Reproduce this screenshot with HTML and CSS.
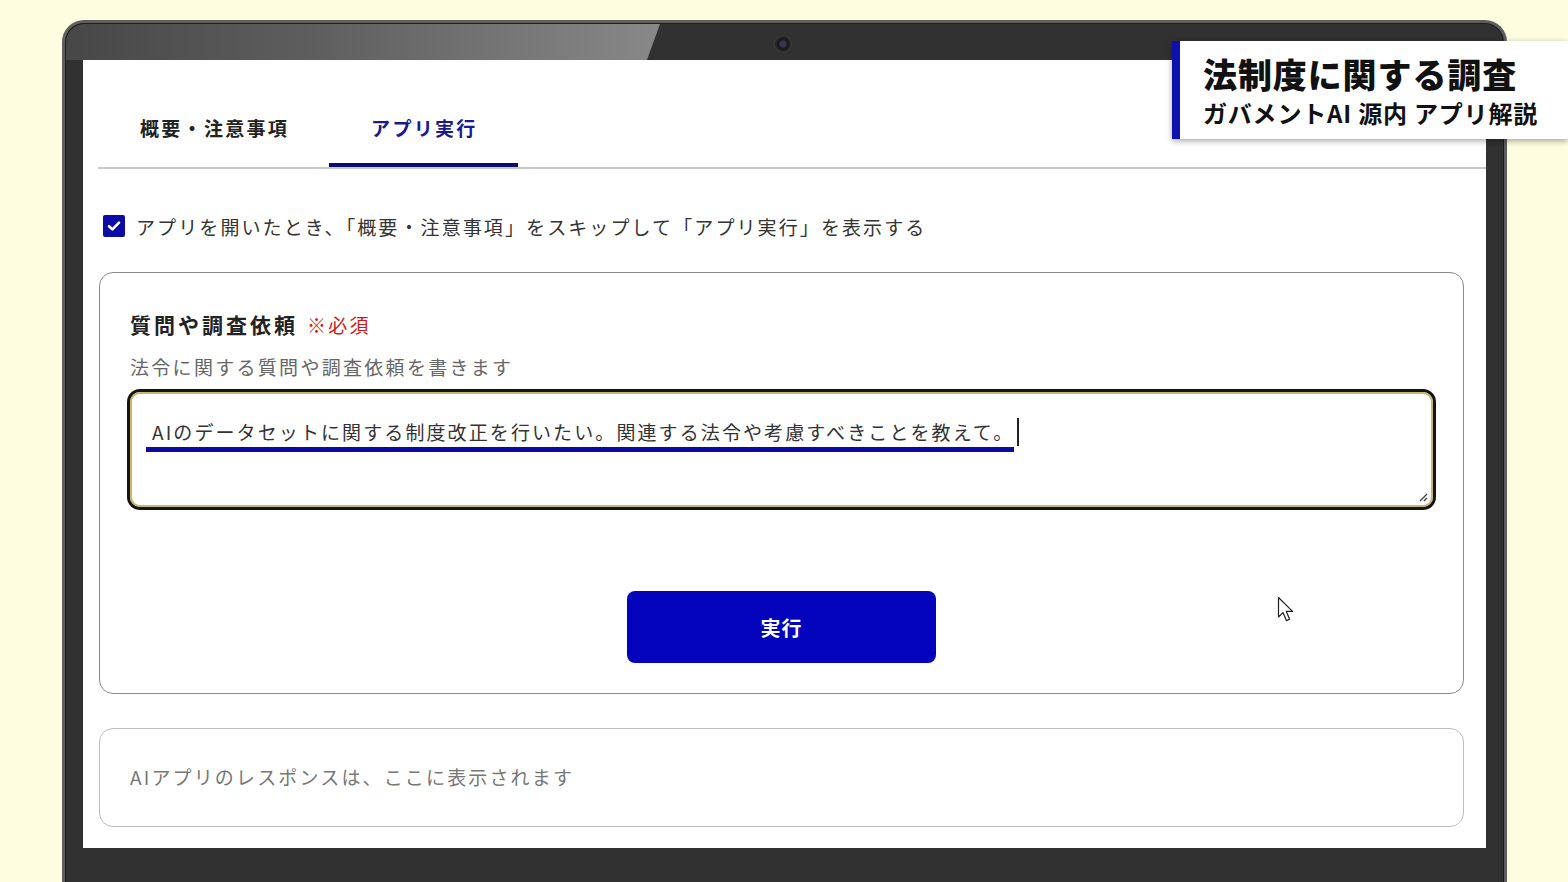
FILE: index.html
```html
<!DOCTYPE html>
<html lang="ja">
<head>
  <meta charset="UTF-8">
  <title>法制度に関する調査</title>
  <link rel="stylesheet" href="styles.css">
</head>
<body>
  <div class="laptop">
    <div class="glare"></div>
    <div class="camera"></div>
    <div class="screen">
      <div class="tabs">
        <div class="tab">概要・注意事項</div>
        <div class="tab tab_active">アプリ実行</div>
      </div>

      <div class="skip_row">
        <span class="check">
          <svg width="14" height="12" viewBox="0 0 14 12"><path d="M2 6.2 L5.4 9.4 L12 2.6" fill="none" stroke="#fff" stroke-width="2.6" stroke-linecap="round" stroke-linejoin="round"/></svg>
        </span>
        <span class="skip_text">アプリを開いたとき、「概要・注意事項」をスキップして「アプリ実行」を表示する</span>
      </div>

      <div class="form_card">
        <div class="field_label">質問や調査依頼<span class="required">※必須</span></div>
        <div class="field_hint">法令に関する質問や調査依頼を書きます</div>
        <div class="prompt">
          <span class="composing">AIのデータセットに関する制度改正を行いたい。関連する法令や考慮すべきことを教えて。</span><span class="caret"></span>
          <svg class="grip" width="10" height="10" viewBox="0 0 10 10"><path d="M9 2 L2 9 M9 6 L6 9" stroke="#444" stroke-width="1.3" fill="none"/></svg>
        </div>
        <div class="actions">
          <button class="run_button">実行</button>
        </div>
      </div>

      <div class="response_card">AIアプリのレスポンスは、ここに表示されます</div>
    </div>
  </div>

  <div class="caption">
    <div class="caption_title">法制度に関する調査</div>
    <div class="caption_sub">ガバメントAI 源内 アプリ解説</div>
  </div>

  <svg class="pointer" width="20" height="28" viewBox="0 0 20 28">
    <path d="M1.5 1.5 L1.5 21 L6 16.6 L9.4 24.6 L12.6 23.2 L9.3 15.4 L15.6 15.4 Z" fill="#fff" stroke="#222" stroke-width="1.2" stroke-linejoin="round"/>
  </svg>
</body>
</html>
```

FILE: styles.css
```css
body {
  margin: 0;
  height: 882px;
  overflow: hidden;
  background: #fdfde0;
  font-family: "Noto Sans CJK JP", "Noto Sans", sans-serif;
  color: #333;
}
.laptop {
  position: relative;
  box-sizing: border-box;
  width: 1445px;
  margin: 20px 0 0 62px;
  padding: 37px 18px 60px;
  background: #313131;
  border: 3px solid #5e5e5e;
  border-bottom: none;
  border-radius: 22px 22px 0 0;
  box-shadow: inset 0 0 0 1px #1e1e1e;
}
.glare {
  position: absolute;
  top: 1px;
  left: 1px;
  width: 594px;
  height: 36px;
  border-top-left-radius: 19px;
  background: linear-gradient(90deg, #474747 0%, #5d5d5d 40%, #888 100%);
  clip-path: polygon(0 0, 100% 0, 97.8% 100%, 0 100%);
}
.camera {
  position: absolute;
  top: 13px;
  left: 710px;
  width: 16px;
  height: 16px;
  border-radius: 50%;
  background: radial-gradient(circle at 50% 50%, #3a3550 0 3px, #1b1b1e 4px 6px, #2a2a2a 7px);
  box-shadow: 0 0 2px #555;
}
.screen {
  box-sizing: border-box;
  height: 788px;
  padding: 33px 0 0 15px;
  background: #fff;
}
.tabs {
  display: flex;
  border-bottom: 2px solid #c8c8c8;
}
.tab {
  padding: 20px 40px 20px 42px;
  font-size: 19px;
  line-height: 30px;
  font-weight: 700;
  letter-spacing: 2.3px;
  color: #222;
  border-bottom: 4px solid transparent;
}
.tab_active {
  color: #1a1a8c;
  border-bottom-color: #0c0c6e;
}
.skip_row {
  display: flex;
  align-items: center;
  gap: 11px;
  margin: 42px 0 31px 5px;
  height: 30px;
}
.check {
  display: flex;
  align-items: center;
  justify-content: center;
  width: 22px;
  height: 22px;
  border-radius: 2px;
  background: #0b0ba6;
}
.skip_text {
  font-size: 19px;
  letter-spacing: 2.1px;
  color: #333;
}
.form_card,
.response_card {
  margin: 0 22px 0 1px;
  border: 1.5px solid #8a8a8a;
  border-radius: 14px;
}
.form_card {
  padding: 35px 30px 30px;
}
.field_label {
  font-size: 21px;
  line-height: 32px;
  font-weight: 700;
  letter-spacing: 3px;
  color: #222;
}
.required {
  margin-left: 9px;
  font-size: 19px;
  font-weight: 400;
  letter-spacing: 2.2px;
  color: #d01818;
}
.field_hint {
  margin-top: 12px;
  font-size: 19px;
  line-height: 28px;
  letter-spacing: 2.3px;
  color: #666;
}
.prompt {
  position: relative;
  box-sizing: border-box;
  height: 115px;
  margin-top: 11px;
  padding: 24px 20px;
  border: 2px solid #c9b56c;
  border-radius: 10px;
  box-shadow: 0 0 0 3px #141414;
  font-size: 19px;
  line-height: 28px;
  letter-spacing: 2.1px;
  color: #333;
}
.composing {
  display: inline-block;
  margin-left: -6px;
  margin-right: -8px;
  padding: 0 0 1px 6px;
  border-bottom: 5px solid #0a0aa4;
}
.caret {
  display: inline-block;
  vertical-align: top;
  width: 2px;
  height: 28px;
  margin-left: 11px;
  background: #222;
}
.grip {
  position: absolute;
  right: 3px;
  bottom: 3px;
}
.actions {
  display: flex;
  justify-content: center;
  margin-top: 84px;
}
.run_button {
  width: 309px;
  height: 72px;
  border: none;
  border-radius: 8px;
  background: #0303bb;
  color: #fff;
  font-family: inherit;
  font-size: 20px;
  font-weight: 700;
  letter-spacing: 1px;
}
.response_card {
  box-sizing: border-box;
  height: 99px;
  margin-top: 34px;
  padding: 34px 30px;
  border-color: #bdbdbd;
  font-size: 19px;
  line-height: 28px;
  letter-spacing: 2.15px;
  color: #777;
}
.caption {
  position: absolute;
  top: 41px;
  left: 1172px;
  right: 0;
  height: 98px;
  box-sizing: border-box;
  padding: 13px 0 0 23px;
  background: #fff;
  border-left: 8px solid #1010b0;
  box-shadow: 0 2px 6px rgba(0, 0, 0, .35);
  color: #111;
  font-weight: 900;
}
.caption_title {
  font-size: 34px;
  line-height: 40px;
  letter-spacing: 0.9px;
}
.caption_sub {
  margin-top: 4px;
  font-size: 24px;
  line-height: 30px;
  font-weight: 700;
  letter-spacing: 0.8px;
}
.pointer {
  position: absolute;
  top: 596px;
  left: 1277px;
}
```
